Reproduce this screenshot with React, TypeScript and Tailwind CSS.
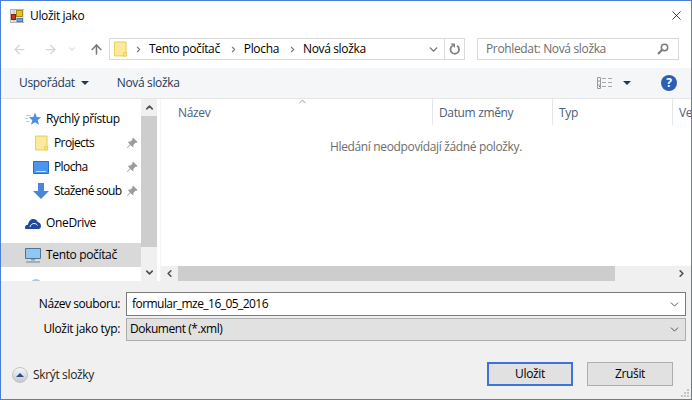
import { ArrowLeft, ArrowRight, ArrowUp, ChevronDown, ChevronLeft, ChevronRight, ChevronUp, X } from "lucide-react"

const font = { fontFamily: '"Open Sans", "Noto Sans", sans-serif' }

function FolderIcon({ className }: { className?: string }) {
  return (
    <svg viewBox="0 0 14 16" className={className}>
      <path d="M.5 .5h12.500v15H.5z" fill="#fcea9c" stroke="#e6c94f" />
      <path d="M10.500 12h3v3.500h-3z" fill="#fcea9c" stroke="#e6c94f" />
    </svg>
  )
}

function PinIcon() {
  return (
    <svg viewBox="0 0 12 12" className="w-3 h-3">
      <path d="M7 .5l4.500 4.500-1 .8-1-.1-2 2 .1 1.500-.9 1L4.600 8.100 1.500 11 1 10.500l2.900-3.100L2 5.300l1-.9 1.500.1 2-2-.1-1z" fill="#9c9c9c" />
    </svg>
  )
}

function NavRow({ icon, label, pinned, selected, indent }: { icon: React.ReactNode; label: string; pinned?: boolean; selected?: boolean; indent?: boolean }) {
  return (
    <div className={`h-6 flex items-center shrink-0 ${selected ? "bg-[#d9d9d9]" : ""} ${indent ? "pl-[32px]" : "pl-[24px]"}`}>
      <div className="w-4 mr-[5px] h-5 flex items-center justify-center shrink-0">{icon}</div>
      <span className={`text-xs text-black whitespace-nowrap ${pinned ? "tracking-[-0.6px]" : ""}`}>{label}</span>
      {pinned && <span className="ml-auto mr-[3px] flex"><PinIcon /></span>}
    </div>
  )
}

function DialogButton({ label, isDefault }: { label: string; isDefault?: boolean }) {
  return (
    <button className={`w-[86px] h-6 bg-[#e1e1e1] text-xs text-black flex items-center justify-center ${isDefault ? "border-2 border-[#3c74dc]" : "border border-[#adadad]"}`}>
      {label}
    </button>
  )
}

export default function App() {
  return (
    <div style={font} className="w-[692px] h-[400px] flex flex-col border border-[#4a80d8] bg-white overflow-hidden tracking-[-0.35px]">
      {/* Title bar */}
      <div className="h-[29px] shrink-0 flex items-center pl-[9px] pr-[7px]">
        <svg viewBox="0 0 14 14" className="w-[14px] h-[14px] shrink-0">
          <path d="M0 0h14v14H0z" fill="#e4e4e4" />
          <path d="M0 .5h14M.5 0v14M0 13.500h14M4 0v14" stroke="#b5b5b5" />
          <rect x="6.500" y="1.500" width="6" height="6" fill="#e8c020" stroke="#a88a18" />
          <rect x="1.500" y="5.500" width="4" height="5" fill="#c03a28" stroke="#7c2218" />
          <rect x="7" y="9.500" width="5.500" height="3" fill="#7ba2e4" stroke="#4f75b4" />
        </svg>
        <span className="ml-[6px] text-xs text-black">Uložit jako</span>
        <X className="ml-auto w-[15px] h-[15px] text-black" strokeWidth={1.2} />
      </div>

      {/* Navigation row */}
      <div className="h-[38px] shrink-0 flex items-start pt-[8px]">
        <div className="w-[108px] h-[22px] flex items-center shrink-0 pl-[11px]">
          <ArrowLeft className="w-[15px] h-[15px] text-[#d5d5d5]" strokeWidth={2} />
          <ArrowRight className="ml-[16px] w-[15px] h-[15px] text-[#d5d5d5]" strokeWidth={2} />
          <ChevronDown className="ml-[9px] w-[10px] h-[10px] text-[#d5d5d5]" strokeWidth={2.500} />
          <ArrowUp className="ml-[12px] w-[15px] h-[15px] text-[#7a7a7a]" strokeWidth={2.500} />
        </div>
        <div className="w-[356px] h-[22px] shrink-0 border border-[#d9d9d9] flex items-center">
          <FolderIcon className="ml-[4px] w-[13px] h-[16px] shrink-0" />
          <ChevronRight className="ml-[7px] w-[9px] h-[9px] text-[#7a7a7a]" strokeWidth={3} />
          <span className="ml-[6px] text-xs text-black">Tento počítač</span>
          <ChevronRight className="ml-[9px] w-[9px] h-[9px] text-[#7a7a7a]" strokeWidth={3} />
          <span className="ml-[6px] text-xs text-black">Plocha</span>
          <ChevronRight className="ml-[9px] w-[9px] h-[9px] text-[#7a7a7a]" strokeWidth={3} />
          <span className="ml-[6px] text-xs text-black">Nová složka</span>
          <ChevronDown className="ml-auto mr-[4px] w-[13px] h-[13px] text-[#707070]" strokeWidth={2.500} />
          <div className="w-5 h-full border-l border-[#d9d9d9] flex items-center justify-center shrink-0">
            <svg viewBox="0 0 12 12" className="w-3 h-3">
              <path d="M3.500 2.800a4.300 4.300 0 1 0 4.500 0" fill="none" stroke="#808080" strokeWidth="1.800" />
              <path d="M1.500 .5h4.500v4.500z" fill="#808080" />
            </svg>
          </div>
        </div>
        <div className="ml-3 w-[202px] h-[22px] shrink-0 border border-[#d9d9d9] flex items-center pl-2 pr-[9px]">
          <span className="text-xs text-[#6d6d6d]">Prohledat: Nová složka</span>
          <svg viewBox="0 0 12 12" className="ml-auto w-3 h-3">
            <circle cx="7.500" cy="4.500" r="3.200" fill="none" stroke="#7a7a7a" strokeWidth="1.500" />
            <path d="M5 7L1 11" stroke="#7a7a7a" strokeWidth="2.200" />
          </svg>
        </div>
      </div>

      {/* Toolbar */}
      <div className="h-[30px] shrink-0 bg-[#f5f6f7] flex items-center pl-[18px]">
        <span className="text-xs text-[#1e395b]">Uspořádat</span>
        <span className="ml-[6px] w-0 h-0 border-x-[4px] border-x-transparent border-t-[4px] border-t-[#1e395b]" />
        <span className="ml-[28px] text-xs text-[#1e395b]">Nová složka</span>
        <svg viewBox="0 0 16 12" className="ml-auto w-4 h-3 shrink-0">
          <path d="M.5 .5h3v11h-3zM.5 4h3M.5 8h3" fill="none" stroke="#9a9a9a" />
          <path d="M2 9.500h1" stroke="#c04040" />
          <path d="M5 1.500h4M11 1.500h4M5 5.500h4M11 5.500h4M5 9.500h4M11 9.500h4" stroke="#a8a8a8" />
        </svg>
        <span className="ml-[10px] w-0 h-0 border-x-[4px] border-x-transparent border-t-[4px] border-t-[#1e395b]" />
        <span className="ml-[30px] mr-[14px] w-4 h-4 rounded-full bg-[#2a5fb8] text-white text-xs font-bold flex items-center justify-center">?</span>
      </div>

      {/* Content */}
      <div className="flex-1 min-h-0 flex border-t border-[#e5e5e5]">
        <div className="w-[140px] shrink-0 flex flex-col pt-[8px] overflow-hidden">
          <NavRow label="Rychlý přístup" icon={
            <svg viewBox="0 0 16 16" className="w-4 h-4">
              <path d="M10 1.500l1.700 4.500 4.300.2-3.300 3 1.300 4.600-4-2.600-4 2.600 1.300-4.600-3.500-3 4.500-.2z" fill="#4a90e2" />
              <path d="M1 4.500h5M0 7.500h3M1 10.500h3" stroke="#a8cdf2" />
            </svg>
          } />
          <NavRow indent pinned label="Projects" icon={<FolderIcon className="w-[13px] h-[16px]" />} />
          <NavRow indent pinned label="Plocha" icon={
            <svg viewBox="0 0 16 13" className="w-4 h-[13px]">
              <path d="M.5 .5h15v12H.5z" fill="#4d94ee" stroke="#2b6fc9" />
              <path d="M3 10.500h10" stroke="#cfe3fb" />
            </svg>
          } />
          <NavRow indent pinned label="Stažené soub" icon={
            <svg viewBox="0 0 16 16" className="w-4 h-4"><path d="M5 0h6v8h5l-8 8-8-8h5z" fill="#4a86d8" /></svg>
          } />
          <div className="h-2 shrink-0" />
          <NavRow label="OneDrive" icon={
            <svg viewBox="0 0 16 11" className="w-4 h-[11px]">
              <path d="M0 9.500C0 7.500 1.500 6.500 3 6.700 3.500 3 6 1 8.500 1c2 0 3.500 1 4.300 3C14.500 4.300 16 6 16 8c0 1.700-1 3-2.500 3h-12C.5 11 0 10.500 0 9.500z" fill="#1f4aa0" />
              <path d="M5 9c.5-2 2-3.500 4-3.500s3 1 3.500 2" fill="none" stroke="#fff" />
            </svg>
          } />
          <div className="h-2 shrink-0" />
          <NavRow selected label="Tento počítač" icon={
            <svg viewBox="0 0 16 15" className="w-4 h-[15px]">
              <path d="M.5 .5h15v10H.5z" fill="#8fc8f5" stroke="#4f7593" />
              <path d="M6 11h4v1.500H6z" fill="#8aa0b5" />
              <path d="M1 14h14" stroke="#8aa0b5" strokeWidth="1.500" />
            </svg>
          } />
          <div className="h-3 shrink-0" />
          <div className="pl-[29px] shrink-0"><div className="w-[12px] h-[12px] rounded-full bg-[#a9c8e6]" /></div>
        </div>

        {/* Nav scrollbar */}
        <div className="w-[16px] shrink-0 bg-[#f0f0f0] flex flex-col items-center">
          <div className="h-[17px] w-full flex items-center justify-center"><ChevronUp className="w-[11px] h-[11px] text-[#505050]" strokeWidth={3.500} /></div>
          <div className="w-full h-[131px] bg-[#cdcdcd]" />
          <div className="mt-auto h-[17px] w-full flex items-center justify-center"><ChevronDown className="w-[11px] h-[11px] text-[#505050]" strokeWidth={3.500} /></div>
        </div>

        {/* File list */}
        <div className="ml-[3px] flex-1 min-w-0 flex flex-col border-l border-[#f5f5f5] overflow-hidden">
          <div className="h-[26px] shrink-0 flex text-xs text-[#4c607a] whitespace-nowrap relative">
            <div className="w-[272px] shrink-0 border-r border-[#e5e5e5] pl-[17px] pt-[6px]">Název</div>
            <div className="w-[120px] shrink-0 border-r border-[#e5e5e5] pl-[6px] pt-[6px]">Datum změny</div>
            <div className="w-[120px] shrink-0 border-r border-[#e5e5e5] pl-[6px] pt-[6px]">Typ</div>
            <div className="pl-[6px] pt-[6px]">Ve</div>
            <ChevronUp className="absolute left-[136px] top-[-3px] w-[11px] h-[11px] text-[#707070]" strokeWidth={1.500} />
          </div>
          <div className="pt-[14px] text-center text-xs text-[#6d6d6d]">Hledání neodpovídají žádné položky.</div>
          <div className="mt-auto h-[15px] shrink-0 bg-[#f0f0f0] flex items-center">
            <div className="w-[17px] flex justify-center"><ChevronLeft className="w-[11px] h-[11px] text-[#505050]" strokeWidth={3.500} /></div>
            <div className="w-[437px] h-full bg-[#cdcdcd]" />
            <div className="ml-auto w-[17px] mr-[1px] flex justify-center"><ChevronRight className="w-[11px] h-[11px] text-[#505050]" strokeWidth={3.500} /></div>
          </div>
        </div>
      </div>

      {/* Bottom panel */}
      <div className="h-[118px] shrink-0 bg-[#f0f0f0] flex flex-col pt-[11px] relative">
        <div className="h-6 flex items-center">
          <span className="w-[119px] text-right text-xs text-black tracking-[-0.45px]">Název souboru:</span>
          <div className="ml-[6px] w-[560px] h-6 bg-white border border-[#7a7a7a] flex items-center pl-[5px] pr-1">
            <span className="text-xs text-black tracking-[-0.55px]">formular_mze_16_05_2016</span>
            <ChevronDown className="ml-auto w-[13px] h-[13px] text-[#505050]" strokeWidth={1.800} />
          </div>
        </div>
        <div className="h-6 mt-[1px] flex items-center">
          <span className="w-[119px] text-right text-xs text-black">Uložit jako typ:</span>
          <div className="ml-[6px] w-[560px] h-[23px] bg-[#e1e1e1] border border-[#adadad] flex items-center pl-[3px] pr-1">
            <span className="text-xs text-black tracking-[-0.44px]">Dokument (*.xml)</span>
            <ChevronDown className="ml-auto w-[13px] h-[13px] text-[#505050]" strokeWidth={1.800} />
          </div>
        </div>
        <div className="mt-[21px] flex items-start">
          <div className="ml-[11px] mt-[5px] flex items-center">
            <span className="w-4 h-4 rounded-full bg-gradient-to-b from-[#f5f5f5] to-[#c5c9d0] border border-[#c0c4cc] flex items-center justify-center">
              <span className="w-0 h-0 border-x-[4px] border-x-transparent border-b-[4px] border-b-[#2a4a8a]" />
            </span>
            <span className="ml-[5px] text-xs text-[#1e1e1e]">Skrýt složky</span>
          </div>
          <div className="ml-auto mr-[18px] flex gap-[14px]">
            <DialogButton isDefault label="Uložit" />
            <DialogButton label="Zrušit" />
          </div>
        </div>
        <svg viewBox="0 0 10 10" className="absolute right-[1px] bottom-[1px] w-[10px] h-[10px]">
          <path d="M7 1h2v2H7zM4 4h2v2H4zM7 4h2v2H7zM1 7h2v2H1zM4 7h2v2H4zM7 7h2v2H7z" fill="#c4c4c4" />
        </svg>
      </div>
    </div>
  )
}
